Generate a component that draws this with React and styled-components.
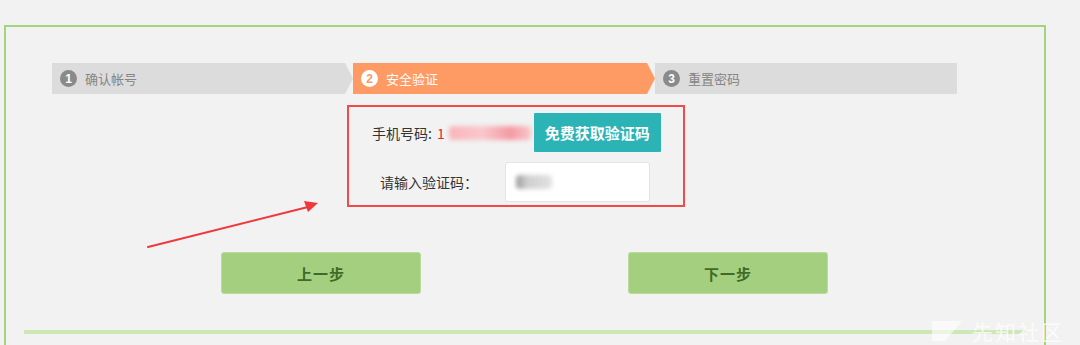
import React from 'react';
import styled, { createGlobalStyle } from 'styled-components';

const GlobalStyle = createGlobalStyle`
  html, body {
    margin: 0;
    padding: 0;
    background: #f2f2f2;
    font-family: "Noto Sans CJK SC", "Noto Sans", sans-serif;
  }
  * { box-sizing: border-box; }
`;

const Page = styled.div`
  position: relative;
  width: 1080px;
  height: 345px;
  overflow: hidden;
  padding: 25px 0 0 4px;
`;

const Frame = styled.div`
  width: 1042px;
  height: 340px;
  border: 2px solid #a5d47f;
  border-bottom: none;
  padding: 36px 0 0 46px;
`;

const Steps = styled.div`
  display: flex;
  height: 31px;
`;

const Step = styled.div`
  display: flex;
  align-items: center;
  width: ${(p) => p.$width}px;
  height: 100%;
  padding-left: 8px;
  gap: 8px;
  background: ${(p) => (p.$active ? '#fe9a64' : '#dcdcdc')};
  color: ${(p) => (p.$active ? '#ffffff' : '#858585')};
  font-size: 13px;
  clip-path: ${(p) =>
    p.$tip
      ? 'polygon(0 0, calc(100% - 8px) 0, 100% 50%, calc(100% - 8px) 100%, 0 100%)'
      : 'none'};
`;

const StepNum = styled.span`
  display: inline-flex;
  align-items: center;
  justify-content: center;
  width: 17px;
  height: 17px;
  border-radius: 50%;
  background: ${(p) => (p.$active ? '#ffffff' : '#8a8a8a')};
  color: ${(p) => (p.$active ? '#fe9a64' : '#ffffff')};
  font-family: "Liberation Sans", Arial, sans-serif;
  font-size: 12px;
  font-weight: bold;
`;

const VerifyBox = styled.div`
  width: 338px;
  height: 102px;
  margin: 11px 0 0 295px;
  border: 2px solid #ef4b4b;
  padding-top: 6px;
  display: flex;
  flex-direction: column;
  gap: 10px;
`;

const Row = styled.div`
  display: flex;
  align-items: center;
  height: ${(p) => p.$height}px;
  padding-left: ${(p) => p.$indent}px;
`;

const Label = styled.span`
  font-size: 14px;
  color: #333333;
  white-space: nowrap;
`;

const PhoneFirst = styled.span`
  margin-left: 5px;
  font-size: 14px;
  color: #e8262a;
`;

const Blurred = styled.span`
  display: inline-block;
  width: ${(p) => p.$width}px;
  height: 14px;
  margin-left: ${(p) => p.$offset}px;
  background: ${(p) => p.$color};
  filter: blur(2px);
  border-radius: 4px;
`;

const SmsButton = styled.button`
  margin-left: 3px;
  width: 127px;
  height: 39px;
  border: none;
  border-radius: 1px;
  background: #2bb3b6;
  color: #ffffff;
  font-family: inherit;
  font-size: 15px;
  font-weight: bold;
  padding: 0;
`;

const CodeInput = styled.div`
  margin-left: 27px;
  width: 145px;
  height: 40px;
  background: #ffffff;
  border: 1px solid #e4e4e4;
  border-radius: 3px;
  display: flex;
  align-items: center;
  padding-left: 10px;
`;

const Actions = styled.div`
  display: flex;
  gap: 207px;
  margin: 45px 0 0 169px;
`;

const StepButton = styled.button`
  width: 200px;
  height: 42px;
  border: 1px solid #b8dc9a;
  border-radius: 3px;
  background: #a3cf7e;
  color: #3f6a27;
  font-family: inherit;
  font-size: 15px;
  font-weight: bold;
  letter-spacing: 1px;
  padding: 0;
`;

const BottomLine = styled.div`
  width: 1001px;
  height: 4px;
  margin: 36px 0 0 -28px;
  background: #cde8b6;
`;

const Pointer = styled.svg`
  position: absolute;
  left: 140px;
  top: 195px;
`;

const Watermark = styled.div`
  position: absolute;
  right: 16px;
  bottom: 2px;
  display: flex;
  align-items: center;
  gap: 6px;
  color: rgba(255, 255, 255, 0.75);
  font-size: 21px;
  line-height: 24px;
  letter-spacing: 2px;
`;

const steps = [
  { n: 1, text: '确认帐号', width: 301, tip: true },
  { n: 2, text: '安全验证', width: 302, tip: true, active: true },
  { n: 3, text: '重置密码', width: 302 },
];

export default function App() {
  return (
    <>
      <GlobalStyle />
      <Page>
        <Frame>
          <Steps>
            {steps.map((s) => (
              <Step key={s.n} $width={s.width} $tip={s.tip} $active={s.active}>
                <StepNum $active={s.active}>{s.n}</StepNum>
                {s.text}
              </Step>
            ))}
          </Steps>

          <VerifyBox>
            <Row $height={39} $indent={23}>
              <Label>手机号码:</Label>
              <PhoneFirst>1</PhoneFirst>
              <Blurred $width={82} $offset={4} $color="linear-gradient(90deg, #f7b5bb, #f9c8cc 40%, #f49aa2 75%, #f9c7cb)" />
              <SmsButton>免费获取验证码</SmsButton>
            </Row>
            <Row $height={40} $indent={31}>
              <Label>请输入验证码：</Label>
              <CodeInput>
                <Blurred $width={36} $offset={0} $color="linear-gradient(90deg, #9a9a9a, #cfcfcf 30%, #e2e2e2)" />
              </CodeInput>
            </Row>
          </VerifyBox>

          <Actions>
            <StepButton>上一步</StepButton>
            <StepButton>下一步</StepButton>
          </Actions>

          <BottomLine />
        </Frame>

        <Pointer width="190" height="60" viewBox="0 0 190 60">
          <path d="M8 52 L168 12" stroke="#f0383a" strokeWidth="2" strokeLinecap="round" />
          <path d="M178 8 L164 6 L168 17 Z" fill="#f0383a" />
        </Pointer>

        <Watermark>
          <svg width="36" height="24" viewBox="0 0 36 24">
            <path d="M2 2 H32 L15 22 H2 Z" fill="rgba(255,255,255,0.6)" />
          </svg>
          先知社区
        </Watermark>
      </Page>
    </>
  );
}
